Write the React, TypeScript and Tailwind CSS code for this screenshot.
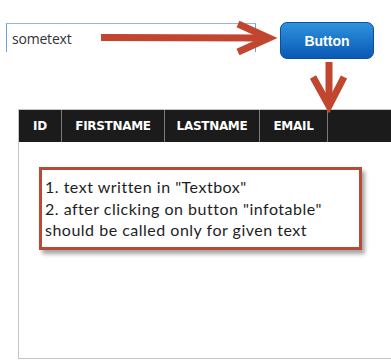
import React from "react";

export default function App() {
  const cols = [
    { label: "ID", w: "w-[43px]" },
    { label: "FIRSTNAME", w: "w-[103px]" },
    { label: "LASTNAME", w: "w-[95px]" },
    { label: "EMAIL", w: "w-[68px]" },
  ];
  return (
    <div className="relative w-[391px] h-[364px] bg-white overflow-hidden">
      <div className="flex items-start pt-[22px]">
        <div className="ml-[6px] mt-[1px] w-[250px] h-[29px] border-t border-l border-r border-t-[#9fb6d2] border-l-[#6ea1d8] border-r-[#6ea1d8] flex items-center pl-[5px] pt-[2px]">
          <span className="text-[14px] text-[#333] leading-none tracking-[-0.2px]" style={{ fontFamily: '"Open Sans", sans-serif' }}>
            sometext
          </span>
        </div>
        <div className="ml-[24px] w-[94px] h-[37px] rounded-[7px] border border-[#0b4f9e] bg-gradient-to-b from-[#2f93de] to-[#0a58b4] flex items-center justify-center">
          <span className="text-white font-bold text-[14px] leading-none" style={{ fontFamily: '"Liberation Sans", sans-serif' }}>
            Button
          </span>
        </div>
      </div>

      <div className="ml-[18px] mt-[50px] w-[380px] h-[250px] border border-[#c4c4c4] flex flex-col">
        <div className="h-[32px] bg-[#1b1b1b] flex">
          {cols.map((c) => (
            <div
              key={c.label}
              className={`${c.w} h-full border-r border-[#7a7a7a] flex items-center justify-center`}
            >
              <span className="text-white font-bold text-[12px] leading-none tracking-[-0.3px]" style={{ fontFamily: '"DejaVu Sans", sans-serif' }}>
                {c.label}
              </span>
            </div>
          ))}
          <div className="flex-1 h-full" />
        </div>
        <div className="pl-[20px] pt-[25px]">
          <div className="w-[323px] h-[83px] border-[3px] border-[#b94a35] bg-white shadow-[3px_4px_4px_rgba(0,0,0,0.35)] pl-[3px] pt-[6px]">
            <div className="text-[16px] leading-[21.5px] tracking-[0.5px] text-[#1e1e1e]" style={{ fontFamily: '"Lato", sans-serif' }}>
              <div>1. text written in "Textbox"</div>
              <div>2. after clicking on button "infotable"</div>
              <div>should be called only for given text</div>
            </div>
          </div>
        </div>
      </div>

      <svg className="absolute left-0 top-0 pointer-events-none" width="391" height="364" viewBox="0 0 391 364">
        <g stroke="#c1452f" strokeWidth="7" fill="none" strokeLinecap="butt" strokeLinejoin="miter">
          <line x1="101" y1="37.5" x2="266" y2="38" />
          <polyline points="238,24 269,38 238,52" />
          <line x1="329" y1="62" x2="329" y2="104" />
          <polyline points="313,77 329,106 344,77" />
        </g>
      </svg>
    </div>
  );
}
